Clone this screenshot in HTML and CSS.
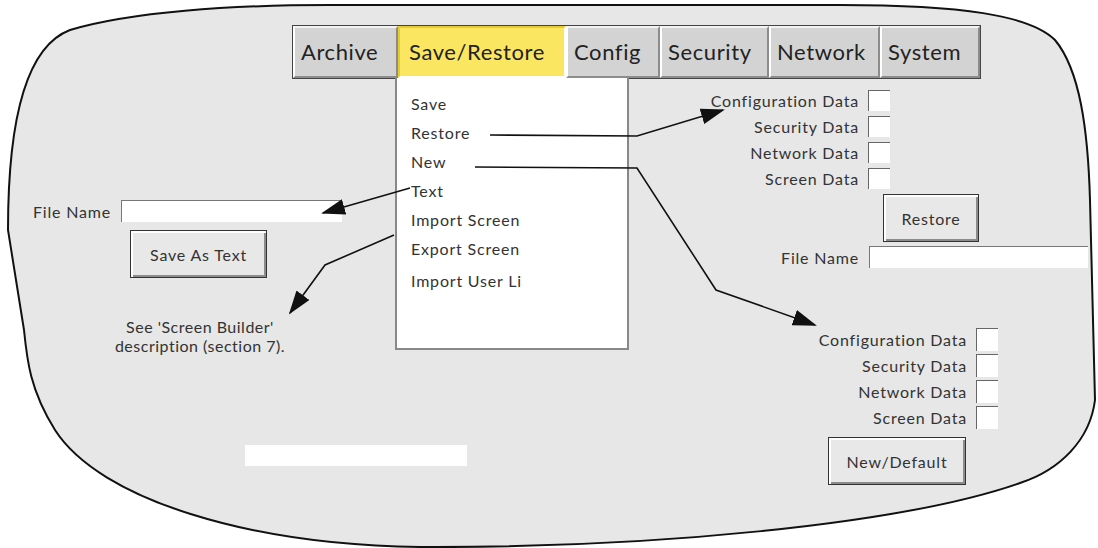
FILE: index.html
```html
<!DOCTYPE html>
<html>
<head>
    <title>Save/Restore</title>
    <link rel="stylesheet" href="styles.css">
</head>
<body>
    <div class="canvas">
        <svg class="shape" width="1098" height="548" viewBox="0 0 1098 548">
            <path class="blob" d="M8 230 C8 110 30 45 70 30 C130 12 230 5 330 5 L840 5 C960 5 1030 15 1055 40 C1080 70 1088 130 1090 200 L1095 400 C1090 440 1060 470 1020 483 C900 525 650 548 420 547 C250 545 100 500 55 430 C30 390 27 360 24 330 Z"/>
        </svg>

        <div class="tabs">
            <div class="tab t-archive">Archive</div>
            <div class="tab active">Save/Restore</div>
            <div class="tab t-config">Config</div>
            <div class="tab t-security">Security</div>
            <div class="tab t-network">Network</div>
            <div class="tab t-system">System</div>
        </div>

        <ul class="menu">
            <li>Save</li>
            <li>Restore</li>
            <li>New</li>
            <li>Text</li>
            <li>Import Screen</li>
            <li>Export Screen</li>
            <li class="last">Import User Li</li>
        </ul>

        <div class="panel restore-panel">
            <div class="checks">
                <span>Configuration Data</span><span class="box"></span>
                <span>Security Data</span><span class="box"></span>
                <span>Network Data</span><span class="box"></span>
                <span>Screen Data</span><span class="box"></span>
            </div>
            <button class="btn restore-btn">Restore</button>
            <div class="field">
                <span>File Name</span><span class="input wide"></span>
            </div>
        </div>

        <div class="panel text-panel">
            <div class="field">
                <span>File Name</span><span class="input"></span>
            </div>
            <button class="btn text-btn">Save As Text</button>
        </div>

        <p class="note">See 'Screen Builder'<br>description (section 7).</p>

        <div class="panel new-panel">
            <div class="checks">
                <span>Configuration Data</span><span class="box"></span>
                <span>Security Data</span><span class="box"></span>
                <span>Network Data</span><span class="box"></span>
                <span>Screen Data</span><span class="box"></span>
            </div>
            <button class="btn new-btn">New/Default</button>
        </div>

        <div class="bar"></div>

        <!-- callout arrows drawn over the widgets -->
        <svg class="arrows" width="1098" height="548" viewBox="0 0 1098 548">
            <defs>
                <marker id="head" markerWidth="24" markerHeight="16" refX="22" refY="8" orient="auto" markerUnits="userSpaceOnUse">
                    <path d="M0 0 L24 8 L0 16 Z" fill="#111"/>
                </marker>
            </defs>
            <polyline class="arrow" points="490,135 637,136 723,110" marker-end="url(#head)"/>
            <polyline class="arrow" points="475,167 637,168 716,290 815,325" marker-end="url(#head)"/>
            <polyline class="arrow" points="410,188 323,213" marker-end="url(#head)"/>
            <polyline class="arrow" points="394,235 325,265 290,313" marker-end="url(#head)"/>
        </svg>
    </div>
</body>
</html>
```

FILE: styles.css
```css
body {
    margin: 0;
    padding: 0;
    background-color: #ffffff;
    font-family: Lato, "Open Sans", sans-serif;
    color: #333333;
}

.canvas {
    position: relative;
    width: 1098px;
    height: 548px;
    overflow: hidden;
}

.shape,
.arrows {
    position: absolute;
    left: 0;
    top: 0;
}

.arrows {
    pointer-events: none;
}

.blob {
    fill: #e6e7e6;
    stroke: #111111;
    stroke-width: 2;
}

.arrow {
    fill: none;
    stroke: #111111;
    stroke-width: 1.6;
}

/* tab strip */
.tabs {
    position: absolute;
    left: 292px;
    top: 25px;
    display: flex;
    border: 1px solid #444444;
    background-color: #ffffff;
}

.tab {
    box-sizing: border-box;
    height: 52px;
    line-height: 48px;
    padding-left: 6px;
    font-size: 22px;
    letter-spacing: 0.6px;
    color: #222222;
    background-color: #d3d3d3;
    border-top: 2px solid #f2f2f2;
    border-left: 2px solid #ffffff;
    border-right: 2px solid #8c8c8c;
    border-bottom: 2px solid #8c8c8c;
}

.t-archive { width: 105px; }
.t-config { width: 94px; }
.t-security { width: 109px; }
.t-network { width: 111px; }
.t-system { width: 100px; }

.tab.active {
    width: 168px;
    padding-left: 9px;
    background-color: #fbe662;
    border-top: 2px solid #e8cc2c;
    border-left: 2px solid #e8cc2c;
    border-right: 2px solid #ffffff;
    border-bottom: 2px solid #ffffff;
}

/* drop down */
.menu {
    position: absolute;
    left: 395px;
    top: 78px;
    width: 234px;
    height: 272px;
    margin: 0;
    padding: 16px 0 0 14px;
    box-sizing: border-box;
    list-style: none;
    background-color: #ffffff;
    border: 2px solid #888888;
    border-top: none;
}

.menu li {
    height: 29px;
    font-size: 16px;
    letter-spacing: 0.8px;
}

.menu li.last {
    margin-top: 3px;
}

.panel {
    position: absolute;
    display: flex;
    flex-direction: column;
    font-size: 16px;
    letter-spacing: 0.8px;
}

.checks {
    display: grid;
    grid-template-columns: auto 22px;
    column-gap: 9px;
    row-gap: 5px;
    justify-items: end;
}

.checks span {
    height: 21px;
    line-height: 21px;
}

.box {
    width: 22px;
    background-color: #ffffff;
    border-left: 1px solid #666666;
    border-top: 1px solid #666666;
    box-sizing: border-box;
}

.btn {
    font-family: Lato, "Open Sans", sans-serif;
    font-size: 16px;
    letter-spacing: 0.8px;
    color: #333333;
    background-color: #e8e8e8;
    border: 1px solid #333333;
    box-shadow: inset 2px 2px 0 #ffffff, inset -2px -2px 0 #8c8c8c;
    padding: 0;
}

.field {
    display: flex;
    align-items: center;
    gap: 10px;
}

.input {
    width: 221px;
    height: 22px;
    background-color: #ffffff;
    border-left: 1px solid #777777;
    border-top: 1px solid #777777;
    box-sizing: border-box;
}

.input.wide {
    width: 219px;
}

.restore-panel {
    right: 10px;
    top: 90px;
    align-items: flex-end;
}

.restore-panel .checks {
    margin-right: 198px;
}

.restore-btn {
    width: 96px;
    height: 48px;
    margin: 5px 109px 4px 0;
}

.text-panel {
    left: 33px;
    top: 200px;
}

.text-btn {
    width: 137px;
    height: 48px;
    margin: 8px 0 0 97px;
}

.note {
    position: absolute;
    left: 90px;
    top: 317px;
    width: 220px;
    margin: 0;
    text-align: center;
    font-size: 16px;
    letter-spacing: 0.5px;
    line-height: 19px;
}

.new-panel {
    right: 100px;
    top: 328px;
    align-items: flex-end;
}

.new-panel .checks {
    row-gap: 3px;
}

.new-panel .checks span {
    height: 23px;
    line-height: 23px;
}

.new-btn {
    width: 138px;
    height: 48px;
    margin: 8px 32px 0 0;
}

.bar {
    position: absolute;
    left: 245px;
    top: 445px;
    width: 222px;
    height: 21px;
    background-color: #ffffff;
}
```
